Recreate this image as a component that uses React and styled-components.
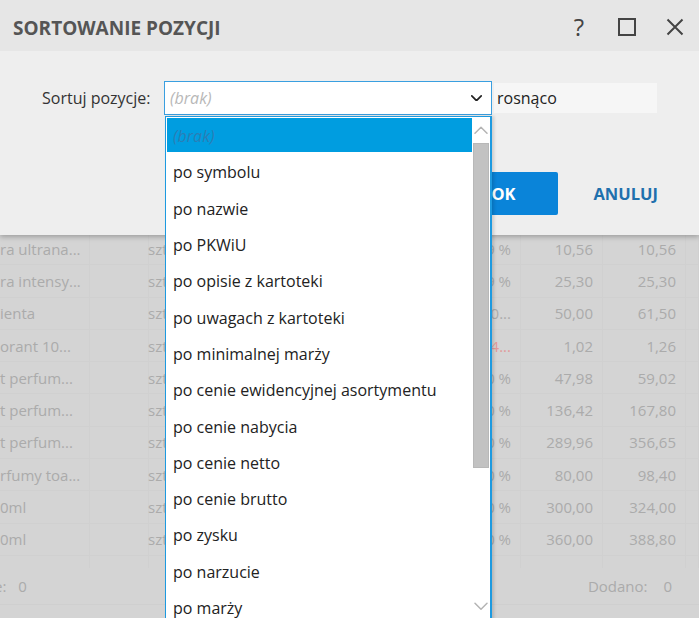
import React from "react";
import styled, { createGlobalStyle } from "styled-components";

const Global = createGlobalStyle`
  html, body { margin: 0; padding: 0; }
  body { font-family: "Open Sans", "Noto Sans", sans-serif; overflow: hidden; }
`;

const Page = styled.div`
  position: relative;
  width: 699px;
  height: 618px;
  overflow: hidden;
  background: #d4d4d4;
  display: flex;
  flex-direction: column;
`;

const HiddenHeader = styled.div`
  height: 233px;
  flex: none;
`;

const Table = styled.div`
  height: 335px;
  flex: none;
  overflow: hidden;
`;

const Row = styled.div`
  display: grid;
  grid-template-columns: 90px 50px 300px 81px 82px 83px 13px;
  height: 32.3px;
  box-sizing: border-box;
  border-bottom: 1px solid #d0d0d0;
`;

const Cell = styled.div`
  display: flex;
  align-items: center;
  justify-content: ${(p) => (p.$right ? "flex-end" : "flex-start")};
  padding: 0 ${(p) => (p.$right ? "9px" : "0")} 0 ${(p) => (p.$pad || 0)}px;
  border-right: 1px solid #d0d0d0;
  font-size: 15px;
  color: ${(p) => (p.$red ? "#e29a9a" : "#ababab")};
  white-space: nowrap;
`;

const Footer = styled.div`
  height: 37px;
  flex: none;
  display: flex;
  align-items: center;
  justify-content: space-between;
  padding: 0 27px 0 0;
  font-size: 15px;
  color: #ababab;
  box-sizing: border-box;
  border-bottom: 1px solid #cfcfcf;
`;

const FooterLeft = styled.span`
  margin-left: -6px;
  word-spacing: 8px;
`;

const FooterRight = styled.span`
  word-spacing: 12px;
`;

const Dialog = styled.div`
  position: absolute;
  top: 0;
  left: 0;
  width: 699px;
  height: 235px;
  background: #eeeeee;
  box-shadow: 0 2px 5px rgba(0, 0, 0, 0.25);
  display: flex;
  flex-direction: column;
`;

const TitleBar = styled.div`
  height: 51px;
  background: #e6e6e6;
  display: flex;
  align-items: center;
  padding: 0 15px 0 13px;
  flex: none;
`;

const Title = styled.div`
  flex: 1;
  font-family: "Open Sans", sans-serif;
  font-weight: 700;
  font-size: 19px;
  color: #555555;
  margin-top: 4px;
`;

const TitleIcons = styled.div`
  display: flex;
  align-items: center;
  gap: 30px;
  margin-top: 3px;
`;

const HelpGlyph = styled.span`
  font-family: "Open Sans", sans-serif;
  font-size: 24px;
  color: #444;
  width: 20px;
  text-align: center;
  line-height: 1;
  margin-right: -1px;
`;

const Body = styled.div`
  flex: 1;
  display: flex;
  flex-direction: column;
`;

const FormRow = styled.div`
  display: flex;
  align-items: center;
  margin-top: 30px;
  padding-left: 42px;
`;

const Label = styled.label`
  font-size: 16px;
  color: #333;
  width: 122px;
`;

const Select = styled.div`
  width: 328px;
  height: 34px;
  box-sizing: border-box;
  border: 1px solid #3a9fe0;
  background: #fff;
  display: flex;
  align-items: center;
  padding: 0 9px 0 5px;
`;

const Placeholder = styled.span`
  flex: 1;
  font-style: italic;
  font-size: 16px;
  color: #b8b8b8;
`;

const OrderBox = styled.div`
  margin-left: 2px;
  width: 163px;
  height: 30px;
  background: #f6f6f6;
  display: flex;
  align-items: center;
  padding-left: 3px;
  box-sizing: border-box;
  font-size: 16px;
  color: #222;
`;

const ButtonRow = styled.div`
  display: flex;
  justify-content: flex-end;
  align-items: center;
  margin-top: 57px;
  padding-right: 41px;
  gap: 35px;
`;

const PrimaryButton = styled.button`
  width: 110px;
  height: 43px;
  border: none;
  border-radius: 2px;
  background: #0a84d9;
  color: #fff;
  font-family: "Open Sans", sans-serif;
  font-weight: 700;
  font-size: 16.5px;
`;

const TextButton = styled.button`
  border: none;
  background: none;
  padding: 0;
  color: #1f70ad;
  font-family: "Open Sans", sans-serif;
  font-weight: 700;
  font-size: 16.5px;
`;

const DropList = styled.div`
  position: absolute;
  left: 165px;
  top: 116px;
  width: 327px;
  height: 504px;
  box-sizing: border-box;
  border: 1px solid #1d9ae0;
  border-right-width: 2px;
  background: #fff;
  display: flex;
  overflow: hidden;
  box-shadow: 2px 0 3px rgba(0, 0, 0, 0.15);
`;

const Items = styled.div`
  flex: 1;
  padding: 1px 0 0 1px;
`;

const Item = styled.div`
  height: 36.3px;
  box-sizing: border-box;
  display: flex;
  align-items: center;
  padding-left: 6px;
  font-size: 16px;
  color: ${(p) => (p.$selected ? "#2b7db5" : "#222")};
  font-style: ${(p) => (p.$selected ? "italic" : "normal")};
  background: ${(p) => (p.$selected ? "#009de0" : "transparent")};
  background-clip: padding-box;
  border-bottom: ${(p) => (p.$selected ? "2px solid transparent" : "0")};
  padding-top: ${(p) => (p.$selected ? "2px" : "0")};
  white-space: nowrap;
`;

const ScrollBar = styled.div`
  width: 18px;
  display: flex;
  flex-direction: column;
  align-items: center;
`;

const Arrow = styled.div`
  height: 26px;
  display: flex;
  align-items: center;
  justify-content: center;
  flex: none;
`;

const Thumb = styled.div`
  width: 16px;
  height: 325px;
  box-sizing: border-box;
  background: #c2c2c2;
  border: 1px solid #b8b8b8;
  flex: none;
`;

const Track = styled.div`
  flex: 1;
`;

const rows = [
  ["ra ultrana...", "9 %", "10,56", "10,56"],
  ["ra intensy...", "9 %", "25,30", "25,30"],
  ["ienta", "0...", "50,00", "61,50"],
  ["orant 10...", "4...", "1,02", "1,26", true],
  ["t perfum...", "0 %", "47,98", "59,02"],
  ["t perfum...", "0 %", "136,42", "167,80"],
  ["t perfum...", "0 %", "289,96", "356,65"],
  ["rfumy toa...", "0 %", "80,00", "98,40"],
  ["0ml", "0 %", "300,00", "324,00"],
  ["0ml", "0 %", "360,00", "388,80"],
  ["", "0 %", "440,00", "475,20"],
];

const options = [
  "(brak)",
  "po symbolu",
  "po nazwie",
  "po PKWiU",
  "po opisie z kartoteki",
  "po uwagach z kartoteki",
  "po minimalnej marży",
  "po cenie ewidencyjnej asortymentu",
  "po cenie nabycia",
  "po cenie netto",
  "po cenie brutto",
  "po zysku",
  "po narzucie",
  "po marży",
];

const Chevron = ({ up, color = "#b4b4b4", size = 14, sw = 1.5 }) => (
  <svg width={size} height={size * 0.6} viewBox="0 0 14 8" fill="none">
    <path
      d={up ? "M1 7 L7 1 L13 7" : "M1 1 L7 7 L13 1"}
      stroke={color}
      strokeWidth={sw}
      strokeLinecap="round"
      strokeLinejoin="round"
    />
  </svg>
);

export default function App() {
  return (
    <>
      <Global />
      <Page>
        <HiddenHeader />
        <Table>
          {rows.map((r, i) => (
            <Row key={i}>
              <Cell>{r[0]}</Cell>
              <Cell $pad={58}>szt</Cell>
              <Cell />
              <Cell $right $red={r[4]}>
                {r[1]}
              </Cell>
              <Cell $right>{r[2]}</Cell>
              <Cell $right>{r[3]}</Cell>
              <Cell />
            </Row>
          ))}
        </Table>
        <Footer>
          <FooterLeft>e: 0</FooterLeft>
          <FooterRight>Dodano: 0</FooterRight>
        </Footer>

        <Dialog>
          <TitleBar>
            <Title>SORTOWANIE POZYCJI</Title>
            <TitleIcons>
              <HelpGlyph>?</HelpGlyph>
              <svg width="18" height="18" viewBox="0 0 18 18">
                <rect x="1" y="1" width="16" height="16" fill="none" stroke="#444" strokeWidth="2" />
              </svg>
              <svg width="18" height="18" viewBox="0 0 18 18">
                <path d="M1.5 1.5 L16.5 16.5 M16.5 1.5 L1.5 16.5" stroke="#444" strokeWidth="2" />
              </svg>
            </TitleIcons>
          </TitleBar>
          <Body>
            <FormRow>
              <Label>Sortuj pozycje:</Label>
              <Select>
                <Placeholder>(brak)</Placeholder>
                <Chevron color="#222" size={11} sw={2.2} />
              </Select>
              <OrderBox>rosnąco</OrderBox>
            </FormRow>
            <ButtonRow>
              <PrimaryButton>OK</PrimaryButton>
              <TextButton>ANULUJ</TextButton>
            </ButtonRow>
          </Body>
        </Dialog>

        <DropList>
          <Items>
            {options.map((o, i) => (
              <Item key={o} $selected={i === 0}>
                {o}
              </Item>
            ))}
          </Items>
          <ScrollBar>
            <Arrow>
              <Chevron up />
            </Arrow>
            <Thumb />
            <Track />
            <Arrow>
              <Chevron />
            </Arrow>
          </ScrollBar>
        </DropList>
      </Page>
    </>
  );
}
